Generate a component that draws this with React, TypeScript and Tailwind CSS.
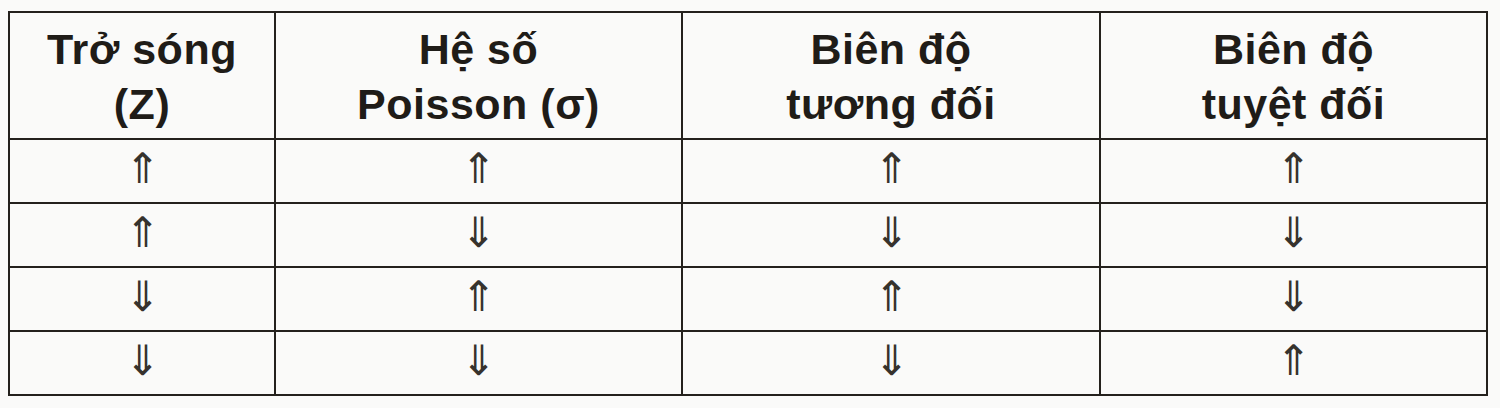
const headers = [
  ["Trở sóng", "(Z)"],
  ["Hệ số", "Poisson (σ)"],
  ["Biên độ", "tương đối"],
  ["Biên độ", "tuyệt đối"],
];

const widths = ["w-[266px]", "w-[407px]", "w-[418px]", "w-[387px]"];

const rows = [
  ["⇑", "⇑", "⇑", "⇑"],
  ["⇑", "⇓", "⇓", "⇓"],
  ["⇓", "⇑", "⇑", "⇓"],
  ["⇓", "⇓", "⇓", "⇑"],
];

const App = () => {
  return (
    <div className="w-[1500px] h-[408px] bg-[#fafaf9] pl-[8px] pt-[11px]">
      <table className="table-fixed border-collapse text-[#1f1c18] font-['Liberation_Sans',Arial,sans-serif]">
        <thead>
          <tr className="h-[127px]">
            {headers.map((h, i) => (
              <th
                key={i}
                className={`${widths[i]} border-2 border-[#24211d] text-center align-middle font-bold text-[43px] leading-[55px] tracking-[0.5px] pt-[2px]`}
              >
                {h[0]}
                <br />
                {h[1]}
              </th>
            ))}
          </tr>
        </thead>
        <tbody>
          {rows.map((r, ri) => (
            <tr key={ri} className="h-[64px]">
              {r.map((a, ci) => (
                <td
                  key={ci}
                  className="border-2 border-[#24211d] text-center align-middle text-[42px] leading-none text-[#36322d] font-['DejaVu_Sans',sans-serif] font-extralight pb-[4px]"
                >
                  {a}
                </td>
              ))}
            </tr>
          ))}
        </tbody>
      </table>
    </div>
  );
};

export default App;
